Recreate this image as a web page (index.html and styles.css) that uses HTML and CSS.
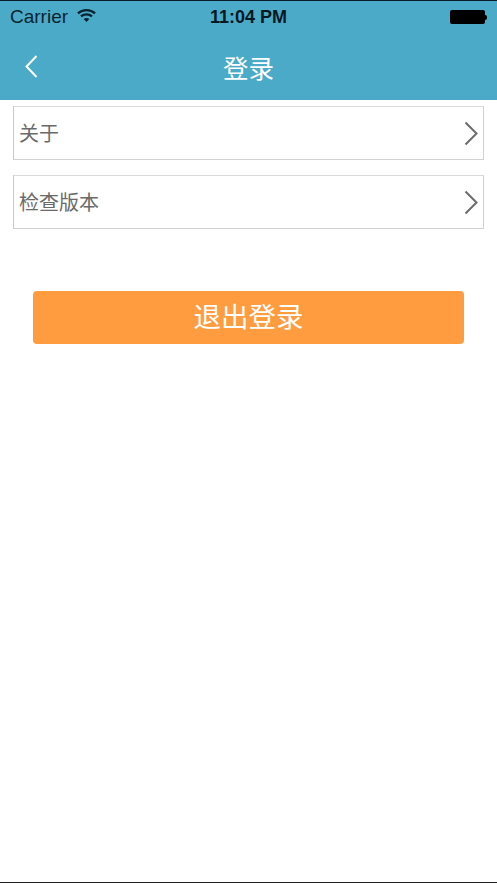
FILE: index.html
```html
<!DOCTYPE html>
<html lang="zh-CN">
  <head>
    <meta charset="UTF-8" />
    <meta name="viewport" content="width=device-width, initial-scale=1.0" />
    <title>登录</title>
    <link rel="stylesheet" href="styles.css">
  </head>
  <body>
    <div class="page">
      <div class="header">
        <div class="status">
          <div class="status-left">
            <span class="carrier">Carrier</span>
            <svg class="wifi" width="19" height="15" viewBox="0 0 20 15">
              <path d="M1 5.2C6 .6 14 .6 19 5.2" fill="none" stroke="#0b2430" stroke-width="2.4" />
              <path d="M4.2 8.4C7.4 5.6 12.6 5.6 15.800 8.4" fill="none" stroke="#0b2430" stroke-width="2.4" />
              <path d="M7 11.2L10 14.4L13 11.2C11.2 9.8 8.800 9.800 7 11.200Z" fill="#0b2430" />
            </svg>
          </div>
          <span class="time">11:04 PM</span>
          <div class="battery"><div class="battery-body"></div><div class="battery-tip"></div></div>
        </div>
        <div class="nav">
          <svg class="back" width="13" height="23" viewBox="0 0 13 23">
            <path d="M11.500 1L1.500 11.500L11.500 22" fill="none" stroke="#fff" stroke-width="2" />
          </svg>
          <span class="nav-title">登录</span>
        </div>
      </div>

      <div class="list">
        <div class="row">
          <span>关于</span>
          <svg class="arrow" width="14" height="25" viewBox="0 0 14 25">
            <path d="M1.500 1.500L12.500 12.500L1.500 23.500" fill="none" stroke="#6b6b6b" stroke-width="2" />
          </svg>
        </div>
        <div class="row">
          <span>检查版本</span>
          <svg class="arrow" width="14" height="25" viewBox="0 0 14 25">
            <path d="M1.500 1.500L12.500 12.500L1.500 23.500" fill="none" stroke="#6b6b6b" stroke-width="2" />
          </svg>
        </div>
      </div>

      <div class="logout"><span>退出登录</span></div>
    </div>
  </body>
</html>
```

FILE: styles.css
```css
html,
body {
  margin: 0;
  padding: 0;
  background-color: #fff;
}
.page {
  height: 883px;
  box-sizing: border-box;
  border-top: 1px solid #0b1a2b;
  border-bottom: 1px solid #222;
  overflow: hidden;
  font-family: "Liberation Sans", "Noto Sans CJK SC", sans-serif;
}
.header {
  height: 99px;
  background: #4aaac8;
}
.status {
  height: 32px;
  padding: 0 10px;
  display: flex;
  align-items: center;
  justify-content: space-between;
  position: relative;
  color: #0b2430;
}
.status-left {
  display: flex;
  align-items: center;
  gap: 9px;
}
.carrier {
  font-size: 19px;
}
.wifi {
  margin-top: -4px;
}
.time {
  position: absolute;
  left: 210px;
  font-size: 18px;
  font-weight: bold;
  color: #07171f;
}
.battery {
  display: flex;
  align-items: center;
}
.battery-body {
  width: 35px;
  height: 14px;
  background: #000;
  border-radius: 2px;
}
.battery-tip {
  width: 2px;
  height: 5px;
  background: #000;
  border-radius: 0 2px 2px 0;
}
.nav {
  height: 67px;
  display: flex;
  align-items: center;
  justify-content: center;
  position: relative;
  color: #fff;
}
.back {
  position: absolute;
  left: 25px;
  top: 22px;
}
.nav-title {
  font-size: 25.500px;
  margin-top: -1px;
}
.list {
  padding: 6px 13px 0;
  display: flex;
  flex-direction: column;
  gap: 15px;
}
.row {
  height: 54px;
  box-sizing: border-box;
  border: 1px solid #d2d2d2;
  border-left-color: #c8c8c8;
  border-top-color: #d9d9d9;
  display: flex;
  align-items: center;
  justify-content: space-between;
  padding: 0 5px 2px 5px;
  font-size: 20px;
  color: #6a6a6a;
}
.arrow {
  margin-top: 2px;
}
.logout {
  margin: 62px 33px 0;
  height: 53px;
  background: #ff9c3f;
  border-radius: 4px;
  color: #fff;
  font-size: 27.500px;
  display: flex;
  align-items: center;
  justify-content: center;
}
.logout span {
  margin-top: -6px;
}
```
